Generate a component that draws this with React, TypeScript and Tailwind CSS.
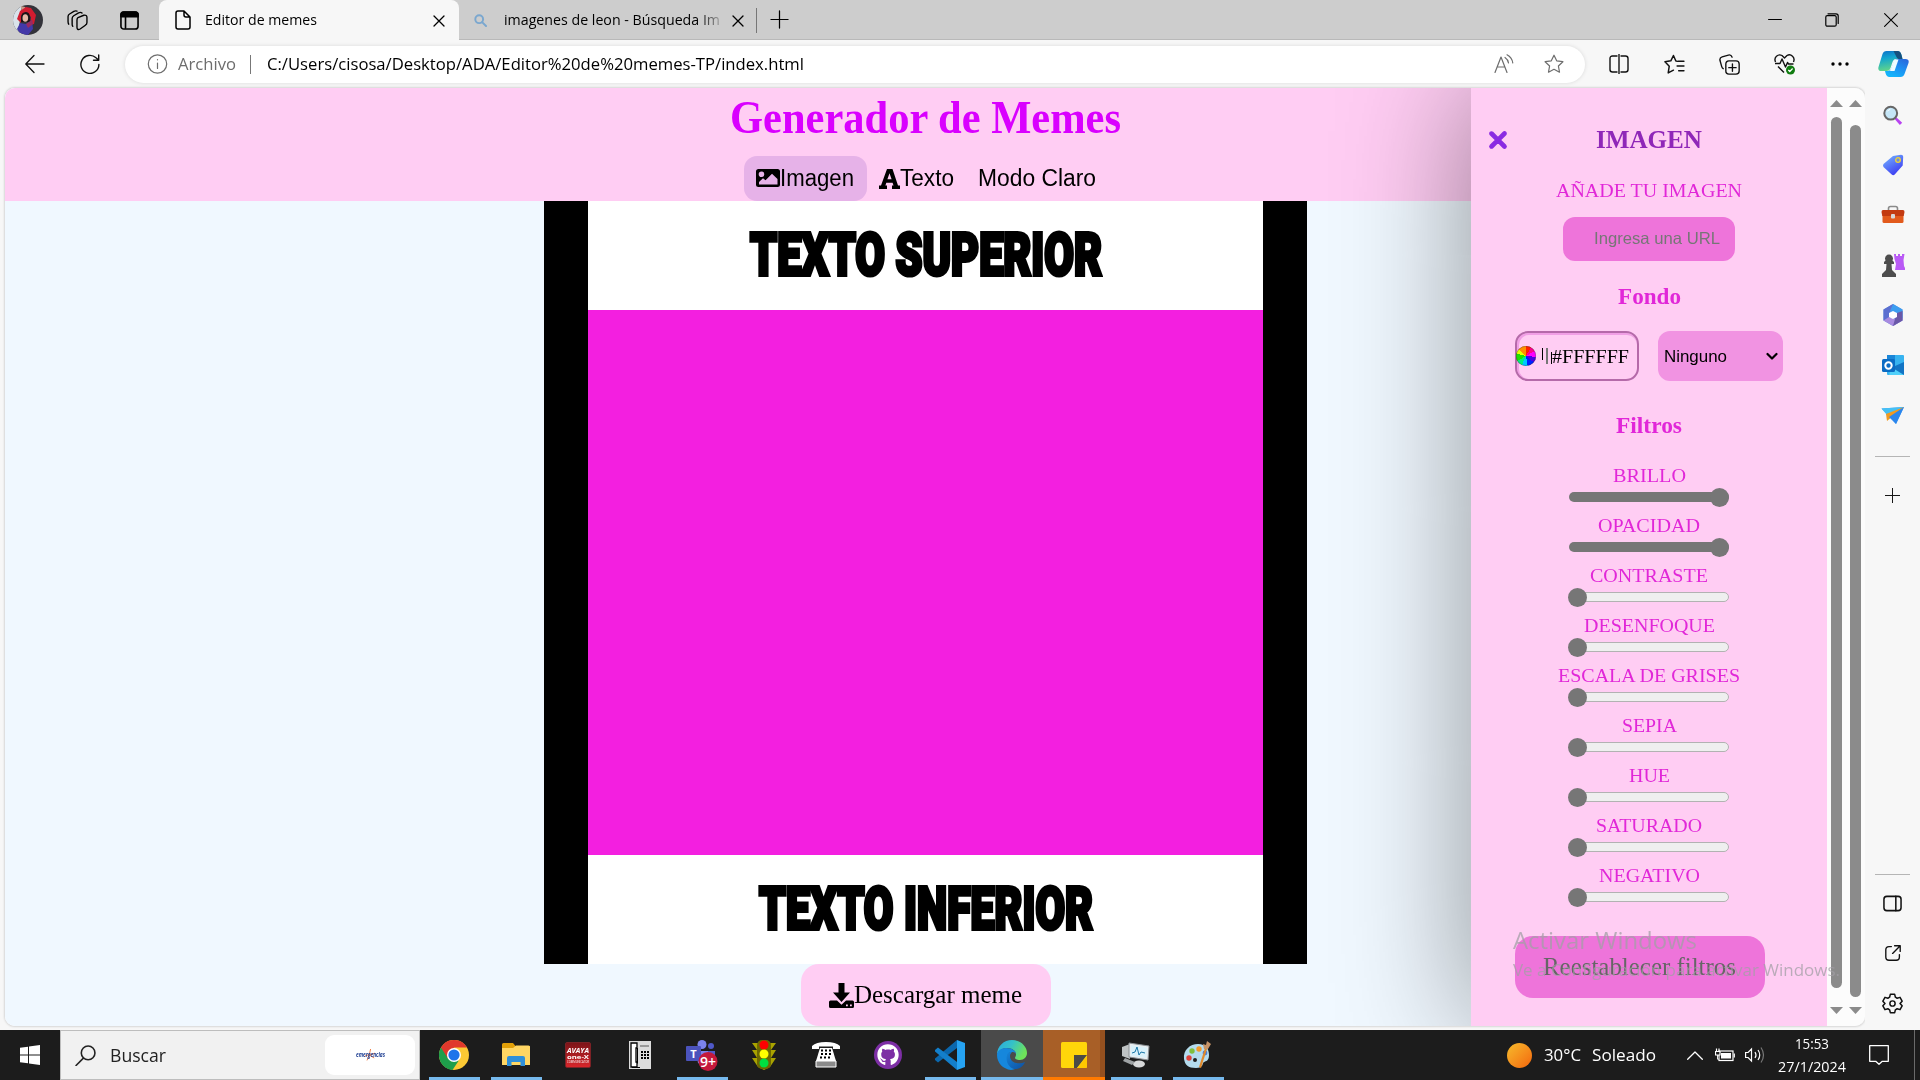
import { useLayoutEffect, useRef, useState, type ReactNode } from "react";
import { FaGithub, FaXmark } from "react-icons/fa6";

/** Text squeezed or stretched horizontally to an exact width. */
function Fit({ w, className = "", children }: { w: number; className?: string; children: ReactNode }) {
  const ref = useRef<HTMLSpanElement>(null);
  const [scale, setScale] = useState(1);
  useLayoutEffect(() => {
    const el = ref.current;
    if (el) setScale(w / (el.getBoundingClientRect().width / scale));
  }, [w]);
  return (
    <span className={`block shrink-0 whitespace-pre ${className}`} style={{ width: w }}>
      <span ref={ref} className="inline-block origin-left" style={{ transform: `scaleX(${scale})` }}>
        {children}
      </span>
    </span>
  );
}

type IconProps = { className?: string; children: ReactNode; box?: string; sw?: number };
function Line({ className = "", children, box = "0 0 20 20", sw = 1.3 }: IconProps) {
  return (
    <svg viewBox={box} className={`block shrink-0 ${className}`} fill="none" stroke="currentColor" strokeWidth={sw} strokeLinecap="round" strokeLinejoin="round">
      {children}
    </svg>
  );
}

const STAR = "M10 1.2l2.7 5.6 6.2.9-4.5 4.3 1.1 6.2L10 15.3l-5.500 2.900 1.100-6.200L1.100 7.700l6.200-.9z";

function Close({ className = "" }: { className?: string }) {
  return (
    <Line className={className} box="0 0 12 12">
      <path d="M1 1l10 10M11 1L1 11" />
    </Line>
  );
}

function TabStrip() {
  return (
    <div className="flex h-10 items-start bg-[#cdcdcd] text-black shadow-[inset_0_-1px_0_#b9b9b9]">
      <div className="flex h-10 w-[159px] items-center">
        <svg viewBox="0 0 30 30" className="ml-[13px] h-[30px] w-[30px]">
          <defs>
            <clipPath id="avatar"><circle cx="15" cy="15" r="15" /></clipPath>
          </defs>
          <g clipPath="url(#avatar)">
            <rect width="30" height="30" fill="#33333a" />
            <path d="M0 0h9L5 30H0z" fill="#d9e2ea" />
            <path d="M8 1l4 1 2 3-5 3z" fill="#c99b86" />
            <path d="M7 6l6-4 5 1 5 7-2 9-4 1 1-8-5-5-5 4v7l-4-4z" fill="#d31c30" />
            <path d="M8 13q0-6 5-6 4 0 4 6v4H8z" fill="#1c1418" />
            <ellipse cx="12.300" cy="13" rx="2.800" ry="3.800" fill="#e5b7a6" />
            <path d="M7 18l6 1 6-4 1 9-5 6H8L4 24z" fill="#4338a8" />
            <path d="M13 19l6-4 1 4-5 4z" fill="#9a2a60" />
          </g>
        </svg>
        <Line className="ml-[24px] h-[21px] w-[21px]">
          <path d="M10.500 7.200l5.500-2.200q3-.6 3 2v5q0 1.700-1.500 2.500l-5 3.600q-3 1.400-3-1.600V9.500q0-1.500 1-2.300z" />
          <path d="M5.500 15.500q-.6-.6-.6-2V8q0-1.500 1.500-2.500L11 2.700q2-.9 3.300.2M1.600 13.500Q1 12.500 1 11V6.200q0-1.500 1.500-2.400L6.500 1.300q1.500-.8 3-.2" />
        </Line>
        <Line className="ml-[32px] h-[19px] w-[19px]" sw={1.7}>
          <rect x="1" y="1" width="18" height="18" rx="3" />
          <path d="M1 4q0-3 3-3h12q3 0 3 3v2H1z" fill="currentColor" />
          <path d="M5.800 6v12" />
        </Line>
      </div>
      <div className="flex h-10 w-[300px] items-center rounded-t-[8px] bg-[#f7f7f7]">
        <Line className="ml-4 h-[20px] w-4" box="0 0 16 20" sw={1.500}>
          <path d="M3 1h6l6 6v10q0 2-2 2H3q-2 0-2-2V3q0-2 2-2zM9 1v4q0 2 2 2h4" />
        </Line>
        <Fit w={112} className="ml-[14px] font-['Open_Sans'] text-[14.500px]">Editor de memes</Fit>
        <Close className="ml-[116px] mt-px h-3 w-3" />
      </div>
      <div className="flex h-10 w-[299px] items-center border-r border-transparent">
        <Line className="ml-[15px] h-[13px] w-[13px] text-[#7aa7cf]" sw={3}>
          <circle cx="8" cy="8" r="6" /><path d="M12.500 12.500l6 6" />
        </Line>
        <div className="ml-[17px] flex overflow-hidden [mask-image:linear-gradient(to_right,black_90%,rgba(0,0,0,0.25))]">
          <Fit w={216} className="font-['Open_Sans'] text-[14.500px]">imagenes de leon - Búsqueda Im</Fit>
        </div>
        <Close className="ml-[13px] mt-px h-3 w-3" />
        <span className="ml-3 mt-px h-[25px] w-px bg-[#777]" />
      </div>
      <Line className="ml-[12px] mt-[10px] h-[19px] w-[19px]"><path d="M10 1v18M1 10h18" /></Line>
      <Line className="ml-auto mr-[43px] mt-[12px] h-[14px] w-[14px]" box="0 0 14 14" sw={1.200}><path d="M.6 7.500h12.800" /></Line>
      <Line className="mr-[45px] mt-[13px] h-[14px] w-[14px]" box="0 0 14 14" sw={1.200}>
        <rect x=".8" y="2.600" width="10.400" height="10.600" rx="1.500" />
        <path d="M3 .8h8q2.200 0 2.200 2.200v7.500" />
      </Line>
      <Line className="mr-[22px] mt-[13px] h-[14px] w-[14px]" box="0 0 14 14" sw={1.100}><path d="M.6.600l12.800 12.800M13.400.6L.6 13.400" /></Line>
    </div>
  );
}

function Copilot() {
  return (
    <svg viewBox="0 0 30 28" className="ml-[29px] h-[28px] w-[31px] shrink-0">
      <defs>
        <linearGradient id="cpa" x1="0" y1="0" x2=".2" y2="1"><stop stopColor="#0d6fc9" /><stop offset=".4" stopColor="#12a5cf" /><stop offset="1" stopColor="#5fd48c" /></linearGradient>
        <linearGradient id="cpb" x1="1" y1="0" x2=".4" y2="1"><stop stopColor="#2a62d8" /><stop offset=".5" stopColor="#1e8cf0" /><stop offset="1" stopColor="#14b4fb" /></linearGradient>
      </defs>
      <path d="M8 1h11q3 0 4 4l1 4h-6q-3 0-4 3l-2 6q-1 3-4 3H3q-4 0-3-4L4 4q1-3 4-3z" fill="url(#cpa)" />
      <path d="M15 1h4q3 0 4 4l1 4h-4q-2-1-3-4z" fill="#16507e" />
      <path d="M22 27H11q-3 0-4-4l-.5-2H9q3 0 4-3l2.500-6q1-3 4-3H27q4 0 3 4l-4 11q-1 3-4 3z" fill="url(#cpb)" />
      <path d="M16 9.500h4l-4 11.500h-4.500z" fill="#eefcff" />
    </svg>
  );
}

function Toolbar() {
  return (
    <div className="flex h-12 items-center bg-[#f7f7f7] text-[#111]">
      <Line className="ml-[25px] h-[20px] w-[20px]" sw={1.300}><path d="M19 10H1M9 1.500L.8 10 9 18.500" /></Line>
      <Line className="ml-[35px] h-[20px] w-[20px]" sw={1.400}>
        <path d="M18.900 10.500A9 9 0 1 1 16 3.800L18.500 6M18.700 1v5.200h-5.200" />
      </Line>
      <div className="ml-[25px] flex h-[37px] w-[1460px] items-center rounded-full bg-white text-[#6d6d6d] shadow-[0_0_4px_rgba(0,0,0,0.12)]">
        <Line className="ml-[22px] h-[20px] w-[21px]" sw={1.200}><circle cx="10" cy="10" r="9.200" /><path d="M10 9v5.500M10 5.600v.2" /></Line>
        <Fit w={58} className="ml-[10px] font-['Open_Sans'] text-[16.500px]">Archivo</Fit>
        <span className="ml-[14px] h-[19px] w-px bg-[#777]" />
        <Fit w={537} className="ml-[16px] font-['Open_Sans'] text-[16.500px] text-black">C:/Users/cisosa/Desktop/ADA/Editor%20de%20memes-TP/index.html</Fit>
        <Line className="ml-auto mr-[30px] h-[20px] w-[20px]" sw={1.200}>
          <path d="M1 18.500L7 3l6 15.500M3.200 13h7.600M11 3.500q3 2 3.500 5.500M13 .8q5 2.700 5.800 8.200" />
        </Line>
        <Line className="mr-[21px] h-[20px] w-[20px]" sw={1.200}><path d={STAR} /></Line>
      </div>
      <Line className="ml-[24px] h-[20px] w-[20px]" sw={1.400}>
        <path d="M8 2H3.500Q1 2 1 4.500v11Q1 18 3.500 18H8M12 2h4.500Q19 2 19 4.500v11q0 2.500-2.500 2.500H12M10 0v20" />
      </Line>
      <Line className="ml-[35px] h-[21px] w-[21px]" sw={1.400}>
        <path d="M13 7l-1.700-.3L9 1.400 6.500 6.500l-5.600.9L5 11.600 4 18l5-2.600M13.500 7H19M12.500 11.500H19M14 16h5" />
      </Line>
      <Line className="ml-[34px] h-[21px] w-[21px]" sw={1.300}>
        <rect x="6.500" y="6.500" width="12.700" height="12.700" rx="3" /><path d="M12.800 9.500v7M9.300 13h7M4 14Q3 13.500 2.600 12L.9 6Q.5 3.500 3 2.800L9 1q2.500-.6 3.500 2" />
      </Line>
      <svg viewBox="0 0 21 22" className="ml-[34px] h-[22px] w-[21px] shrink-0" fill="none" stroke="#111" strokeWidth="1.400" strokeLinejoin="round">
        <path d="M1.500 9Q0 5.500 2.500 3.200t5.500-.7L10.500 5 13 2.500q3-1.700 5.500.7T19.500 9M1 10.500h5l2-4.500 3.500 8 2-4.500 1 1.500h5M4 13.500l6 6" />
        <circle cx="16.500" cy="17" r="4.500" fill="#107c10" stroke="none" />
        <path d="M14.300 17l1.500 1.500 2.800-3" stroke="#fff" strokeWidth="1.200" />
      </svg>
      <svg viewBox="0 0 18 4" className="ml-[36px] h-1 w-[18px]"><circle cx="2" cy="2" r="1.700" /><circle cx="9" cy="2" r="1.700" /><circle cx="16" cy="2" r="1.700" /></svg>
      <Copilot />
    </div>
  );
}

function MemeText({ w, children }: { w: number; children: string }) {
  return (
    <div className="flex h-[109px] items-start justify-center overflow-hidden bg-white">
      <Fit w={w} className="font-['Roboto'] text-[60px] leading-[107px] font-black text-black [-webkit-text-stroke:4px_black]">{children}</Fit>
    </div>
  );
}

function Editor() {
  return (
    <div className="flex w-[1841px] flex-col items-center bg-[#f0f8ff]">
      <header className="flex h-[113px] w-full flex-col items-center bg-[#ffcdf3]">
        <h1 className="mt-0.5 h-[66px] font-['Liberation_Serif'] text-[46.500px] leading-[56px] font-bold text-[#d900ff]">
          <Fit w={391}>Generador de Memes</Fit>
        </h1>
        <nav className="mr-[11px] flex h-[45px] items-center font-['Liberation_Sans'] text-[23.500px] text-black">
          <button className="flex h-[45px] w-[123px] items-center rounded-[13px] bg-[#e6b2e8] pl-3">
            <svg viewBox="0 0 24 18" className="mt-[-1px] h-[18px] w-6 shrink-0">
              <path fillRule="evenodd" d="M2.500 0h19Q24 0 24 2.500v13q0 2.500-2.500 2.500h-19Q0 18 0 15.500v-13Q0 0 2.500 0zM5.500 2.500a2.800 2.800 0 1 0 0 5.600 2.800 2.800 0 0 0 0-5.600zM3 15.500h18.500V10L16 4.800l-6.500 6.500-2.500-2L3 13z" />
            </svg>
            <Fit w={74}>Imagen</Fit>
          </button>
          <button className="ml-[12px] flex items-center">
            <svg viewBox="0 0 21 20" className="h-5 w-[21px] shrink-0">
              <path fillRule="evenodd" d="M8 0h5.500L19 16.500h2V20h-8v-3.500h1.500l-.9-2.800H7.300l-.9 2.800H8V20H0v-3.500h2zM8.400 10.300h4.200L10.500 4.200z" />
            </svg>
            <Fit w={54}>Texto</Fit>
          </button>
          <button className="ml-[24px]"><Fit w={118}>Modo Claro</Fit></button>
        </nav>
      </header>
      <main className="flex h-[763px] w-[763px] flex-col border-x-[44px] border-black">
        <MemeText w={352}>TEXTO SUPERIOR</MemeText>
        <div className="flex-1 bg-[#f31fe0]" />
        <MemeText w={334}>TEXTO INFERIOR</MemeText>
      </main>
      <button className="flex h-[62px] w-[250px] items-center rounded-[18px] bg-[#ffcdf3] pl-7 font-['Liberation_Serif'] text-[25.500px] text-black">
        <svg viewBox="0 0 25 25" className="h-[25px] w-[25px] shrink-0">
          <path d="M9.500 0h6v9.500H21L12.500 19 4 9.500h5.500z" />
          <path fillRule="evenodd" d="M1.500 17.500H8l4.500 4.300 4.500-4.300h6.500q1.500 0 1.500 1.500v4.500q0 1.500-1.500 1.500h-22Q0 25 0 23.500V19q0-1.500 1.500-1.500zM17 21.500v1.800h1.800v-1.800zM21 21.500v1.800h1.800v-1.800z" />
        </svg>
        <Fit w={168}>Descargar meme</Fit>
      </button>
    </div>
  );
}

const filters = [
  { name: "BRILLO", w: 73, full: true },
  { name: "OPACIDAD", w: 102, full: true },
  { name: "CONTRASTE", w: 118, full: false },
  { name: "DESENFOQUE", w: 131, full: false },
  { name: "ESCALA DE GRISES", w: 182, full: false },
  { name: "SEPIA", w: 55, full: false },
  { name: "HUE", w: 41, full: false },
  { name: "SATURADO", w: 106, full: false },
  { name: "NEGATIVO", w: 101, full: false },
];

const wheel = "bg-[conic-gradient(#ff2000_0_30deg,#ff0090_30deg_60deg,#ff00ff_60deg_95deg,#5000e0_95deg_130deg,#0020ff_130deg_170deg,#00c8ff_170deg_205deg,#00f080_205deg_240deg,#20e000_240deg_285deg,#e8ff00_285deg_315deg,#ff9000_315deg)]";

function Panel() {
  return (
    <aside className="relative flex w-[356px] shrink-0 flex-col items-center bg-[#ffcdf3] font-['Liberation_Serif'] text-[#e127d8] shadow-[0_0_130px_rgba(0,0,0,0.42)]">
      <div className="mt-[37px] flex h-[30px] w-full items-center">
        <FaXmark className="ml-[15px] h-[26px] w-6 stroke-[#8a2be2] stroke-[28px] text-[#8a2be2]" />
        <Fit w={106} className="ml-[86px] text-[25px] leading-[30px] font-bold text-[#8f27b8]">IMAGEN</Fit>
      </div>
      <Fit w={186} className="mt-[24px] text-[19.500px] leading-6">AÑADE TU IMAGEN</Fit>
      <div className="mt-[14px] flex h-11 w-[172px] items-center rounded-[12px] bg-[#ee74da] pl-[31px] text-[#767676]">
        <Fit w={126} className="mt-[-1px] font-['Liberation_Sans'] text-[16.500px]">Ingresa una URL</Fit>
      </div>
      <Fit w={63} className="mt-[22px] text-[22.400px] leading-7 font-bold">Fondo</Fit>
      <div className="mt-[20px] flex h-[50px] w-[268px] justify-between text-black">
        <div className="flex w-[124px] items-center rounded-[13px] border-2 border-[#b56aa9] shadow-[inset_1px_1px_0_1px_#f19fe5]">
          <span className={`-ml-px h-5 w-5 shrink-0 rounded-full ${wheel} shadow-[inset_0_0_1px_black]`} />
          <span className="ml-[6px] flex h-4 w-[10px] shrink-0 justify-between">
            <span className="h-3 w-px bg-black" />
            <span className="h-4 w-[2px] bg-[#777]" />
            <span className="mt-1 h-3 w-px bg-black" />
          </span>
          <Fit w={77} className="mt-px text-[19.500px]">#FFFFFF</Fit>
        </div>
        <div className="flex w-[125px] items-center rounded-[12px] bg-[#f193e2] pl-[6px] font-['Liberation_Sans'] text-[16.500px]">
          <Fit w={63}>Ninguno</Fit>
          <Line className="ml-[39px] h-3 w-3" box="0 0 12 12" sw={2.200}><path d="M1.500 4L6 8.500 10.500 4" /></Line>
        </div>
      </div>
      <Fit w={66} className="mt-[31px] text-[22.400px] leading-7 font-bold">Filtros</Fit>
      <div className="mt-[24px] flex flex-col items-center">
        {filters.map((f) => (
          <div key={f.name} className="flex h-[50px] flex-col items-center">
            <Fit w={f.w} className="h-6 text-[19.500px] leading-6">{f.name}</Fit>
            <div className={f.full ? "mt-[4px] flex h-[10px] w-[160px] items-center justify-end rounded-full bg-[#767676]" : "mt-[4px] flex h-[10px] w-[160px] items-center rounded-full border border-[#b2b2b2] bg-[#efefef]"}>
              <span className={f.full ? "h-[19px] w-[19px] shrink-0 rounded-full bg-[#767676]" : "-ml-[2px] h-[19px] w-[19px] shrink-0 rounded-full bg-[#767676]"} />
            </div>
          </div>
        ))}
      </div>
      <button className="mt-[22px] ml-[44px] flex h-[62px] w-[250px] items-center justify-center self-start rounded-[18px] bg-[#ee74da] text-[25.500px] text-[#666]">
        <Fit w={193} className="-ml-0.5">Reestablecer filtros</Fit>
      </button>
      <div className="pointer-events-none absolute top-[836px] left-[42px] z-20 font-['Open_Sans'] text-[#a39fa6]/75">
        <Fit w={184} className="text-[23.500px] leading-[33px]">Activar Windows</Fit>
        <Fit w={327} className="text-[16px] leading-[26px]">Ve a Configuración para activar Windows.</Fit>
      </div>
    </aside>
  );
}

function Scrollbar({ tall }: { tall?: boolean }) {
  return (
    <div className="flex w-[19px] flex-col items-center text-[#8b8b8b]">
      <svg viewBox="0 0 13 7" className="mt-3 h-[7px] w-[13px] fill-current"><path d="M0 7L6.500 0 13 7z" /></svg>
      <div className={tall ? "mt-[10px] mb-[19px] w-[11px] flex-1 rounded-full bg-current" : "mt-[18px] mb-[10px] w-[11px] flex-1 rounded-full bg-current"} />
      <svg viewBox="0 0 13 7" className="mb-3 h-[7px] w-[13px] fill-current"><path d="M0 0l6.500 7L13 0z" /></svg>
    </div>
  );
}

function Slot({ children }: { children: ReactNode }) {
  return <div className="flex h-[50px] items-center justify-center">{children}</div>;
}

function Sidebar() {
  return (
    <div className="flex w-[55px] flex-col bg-[#f7f7f7] text-[#111]">
      <div className="mt-[2px] flex flex-col">
        <Slot>
          <svg viewBox="0 0 24 24" className="h-[22px] w-[22px]">
            <path d="M15 14l7 6.500-2.500 2.500-6-7z" fill="#b843f0" />
            <circle cx="9.500" cy="10" r="7" fill="#c5e6f7" stroke="#666" strokeWidth="2.200" />
            <path d="M6 8q1-2 3-2" stroke="#fff" fill="none" />
          </svg>
        </Slot>
        <Slot>
          <svg viewBox="0 0 24 24" className="h-6 w-6">
            <defs><linearGradient id="tag" x2=".6" y2="1"><stop stopColor="#78bdff" /><stop offset="1" stopColor="#3d3cf2" /></linearGradient></defs>
            <path d="M12 3l8-1.300q2.200 0 2.200 2l-.5 8.800-8 9q-1.500 1.500-3 0L2.500 14q-1-1.500 0-3z" fill="url(#tag)" />
            <circle cx="17" cy="7" r="2.300" fill="#6c8ee0" stroke="#f5d32e" strokeWidth="1.300" />
          </svg>
        </Slot>
        <Slot>
          <svg viewBox="0 0 24 24" className="h-6 w-6">
            <path d="M7.500 7V5.500q0-2 2-2h5q2 0 2 2V7" fill="none" stroke="#8a8a8a" strokeWidth="1.600" />
            <rect x="1.500" y="11" width="21" height="9" rx="1.500" fill="#e25a1c" />
            <path d="M2 7h20q1.500 0 1.500 2l-.8 4H1.300L.5 9Q.5 7 2 7z" fill="#c33a10" />
            <rect x="10" y="11" width="4" height="4.500" rx="1" fill="#d8d8d8" />
          </svg>
        </Slot>
        <Slot>
          <svg viewBox="0 0 24 24" className="h-6 w-6">
            <path d="M13 1h2v2h2V1h2v2h2V1h2.500l-1 6 .5 6 2 4H14l1-6-1.500-5z" fill="#b95af5" />
            <path d="M4.500 7.500a4 4 0 1 1 7 0L13 9v2h-2.500l.5 6 4 4v3H1v-3l4-4 .5-6H3V9z" fill="#4d4d4d" />
          </svg>
        </Slot>
        <Slot>
          <svg viewBox="0 0 24 24" className="h-6 w-6">
            <path d="M12 1l9.500 5.500v11L12 23l-9.500-5.500v-11z" fill="#5d8ee0" />
            <path d="M12 1l9.500 5.500v9L15 11 9 8z" fill="#3c9df0" />
            <path d="M2.500 6.500L12 1l-3 7-1 8-5.500 1.500z" fill="#5b6fd0" />
            <path d="M2.500 17.500L8 14l6 2 7.500-1v2.500L12 23z" fill="#a88be0" />
            <path d="M21.500 8v9.500L12 23l2-7 2-6z" fill="#6a58a8" />
            <path d="M12 8l4 2v4l-4 2-4-2v-4z" fill="#fff" />
          </svg>
        </Slot>
        <Slot>
          <svg viewBox="0 0 24 24" className="h-6 w-6">
            <rect x="6" y="2" width="17" height="20" rx="1" fill="#37b3f0" />
            <path d="M6 2h8v8H6z" fill="#1a86d8" />
            <path d="M14 13l9-4v13H8z" fill="#1274c4" />
            <path d="M10 14l13 8H8z" fill="#50d0fa" />
            <rect x="1" y="6" width="13" height="13" rx="1.500" fill="#0b6cc4" />
            <circle cx="7.500" cy="12.500" r="3.200" fill="none" stroke="#fff" strokeWidth="2" />
          </svg>
        </Slot>
        <Slot>
          <svg viewBox="0 0 24 24" className="h-6 w-6">
            <path d="M.5 5.500L23 4l-8 17-5-6z" fill="#3a9cf2" />
            <path d="M.5 5.500L23 4 6 12z" fill="#45c0f5" />
            <path d="M23 4L5 11l1 7z" fill="#f39a1f" />
            <path d="M23 4L8 14l7 7z" fill="#2b86ee" />
          </svg>
        </Slot>
      </div>
      <div className="mx-[10px] mt-[16px] h-px bg-[#b5b5b5]" />
      <Line className="mx-auto mt-[31px] h-[15px] w-[15px]"><path d="M10 0v20M0 10h20" /></Line>
      <div className="mx-[10px] mt-auto h-px bg-[#b5b5b5]" />
      <div className="mt-[3px] mb-[2px] flex flex-col">
        <Slot><Line className="h-[19px] w-[19px]" sw={1.600}><rect x="1" y="2.500" width="18" height="15" rx="3" /><path d="M13.500 2.500v15" /></Line></Slot>
        <Slot><Line className="h-4 w-4" sw={1.700}><path d="M8 2H5Q1 2 1 6v9q0 4 4 4h9q4 0 4-4v-3M12 1h7v7M19 1l-9.500 9.500" /></Line></Slot>
        <Slot>
          <Line className="h-[21px] w-[21px]" box="0 0 24 24" sw={1.700}>
            <circle cx="12" cy="12" r="3" />
            <path d="M9.500 1.500h5l.8 3.300 2 1.200 3.300-1 2.400 4.300L20.600 12l2.400 2.700-2.400 4.300-3.300-1-2 1.200-.8 3.300h-5l-.8-3.300-2-1.200-3.300 1L1 14.700 3.400 12 1 9.300 3.400 5l3.300 1 2-1.200z" />
          </Line>
        </Slot>
      </div>
    </div>
  );
}

function Task({ children, mark = "", cell = "" }: { children: ReactNode; mark?: string; cell?: string }) {
  return (
    <div className={`flex h-[50px] w-[62px] flex-col items-center ${cell}`}>
      <div className="flex h-[47px] items-center pt-[3px]">{children}</div>
      <div className={`h-[3px] ${mark}`} />
    </div>
  );
}

const running = "w-[51px] bg-[#76b9ed]";

function Taskbar() {
  return (
    <div className="flex h-[50px] items-center bg-[#1c1c1c] text-white">
      <div className="flex w-[60px] justify-center">
        <svg viewBox="0 0 20 20" className="h-5 w-5" fill="#fff"><path d="M0 2.800l8-1.100v7.800H0zM9 1.600L20 0v9.500H9zM0 10.500h8v7.800l-8-1.100zM9 10.500h11V20L9 18.400z" /></svg>
      </div>
      <div className="flex h-[50px] w-[360px] items-center border border-[#bdbdbd] bg-[#f1f1f1] text-[#222]">
        <Line className="ml-[14px] h-[21px] w-[21px]" sw={1.500}><circle cx="12.500" cy="7.500" r="6.500" /><path d="M8 12.500L1 19.500" /></Line>
        <Fit w={56} className="ml-[14px] font-['Open_Sans'] text-[17.500px]">Buscar</Fit>
        <div className="relative ml-auto mr-1 flex h-10 w-[90px] items-center justify-center rounded-[9px] bg-white">
          <svg viewBox="0 0 20 20" className="absolute h-[12px] w-[12px]" stroke="#f07030" strokeWidth="1.500" fill="none"><path d="M11 0L9 9 1 12M18 7l-9 3-4 9M9 10l8 5" /></svg>
          <Fit w={29} className="relative font-['Open_Sans'] text-[6.500px] leading-[10px] font-bold text-[#1f3f93] italic">emergencias</Fit>
        </div>
      </div>
      <div className="ml-[3px] flex">
        <Task mark={running}>
          <svg viewBox="0 0 30 30" className="h-[30px] w-[30px]">
            <circle cx="15" cy="15" r="15" fill="#fcc934" />
            <path d="M15 15L2 7.500A15 15 0 0 0 13.500 30l6-9z" fill="#1e9e4b" />
            <path d="M2 7.500a15 15 0 0 1 26 0H15L9 18.500z" fill="#e0382c" />
            <circle cx="15" cy="15" r="7" fill="#fff" /><circle cx="15" cy="15" r="5.600" fill="#1f75ea" />
          </svg>
        </Task>
        <Task mark={running}>
          <svg viewBox="0 0 28 24" className="h-6 w-7">
            <path d="M0 1.500Q0 0 1.500 0h9.500l2.500 3H28v5H0z" fill="#e2a008" />
            <path d="M0 5h11l3-2.500h12.500q1.500 0 1.500 1.500V22H0z" fill="#ffd663" />
            <path d="M5 23v-8q0-2 2-2h14q2 0 2 2v8h-4.500v-4h-9v4z" fill="#2f8fd8" />
          </svg>
        </Task>
        <Task>
          <div className="flex h-[26px] w-[26px] flex-col items-center justify-center rounded-[2px] border border-[#7c2226] bg-gradient-to-b from-[#7d1418] to-[#d9262b] font-['Open_Sans'] text-white">
            <Fit w={22} className="text-[7px] leading-[7px] font-bold italic">AVAYA</Fit>
            <Fit w={22} className="text-[6px] leading-[6px] font-bold">one-X</Fit>
            <Fit w={22} className="text-[3px] leading-[4px]">COMMUNICATOR</Fit>
          </div>
        </Task>
        <Task>
          <svg viewBox="0 0 22 28" className="h-7 w-[22px]">
            <rect width="22" height="28" fill="#dcdcdc" />
            <path d="M2 2h6v5H7v14h1v5H2z" fill="#fff" stroke="#000" strokeWidth="1.300" />
            <path d="M8.500 22.500V7M3 26.500h8" stroke="#000" fill="none" />
            <path d="M12 11h8M12 14h8M12 17h8" stroke="#000" strokeWidth="2" strokeDasharray="2 1" />
            <path d="M11 5h9" stroke="#999" strokeWidth="2" />
          </svg>
        </Task>
        <Task mark={running}>
          <svg viewBox="0 0 32 32" className="h-8 w-8">
            <circle cx="16" cy="5.500" r="4.500" fill="#7b83eb" /><circle cx="25" cy="7" r="3" fill="#5059c9" />
            <path d="M10 12h12v12q-5 4-10 0z" fill="#7b83eb" /><path d="M22 12h7v9q-4 3-7 0z" fill="#5059c9" />
            <rect x="0" y="7" width="15" height="15" rx="1" fill="#4b53bc" />
            <text x="7.500" y="18.500" textAnchor="middle" fontFamily="Open Sans" fontWeight="700" fontSize="11" fill="#fff">T</text>
            <circle cx="22" cy="22.500" r="9.500" fill="#c4183c" />
            <text x="22" y="27.500" textAnchor="middle" fontFamily="Open Sans" fontWeight="600" fontSize="14" fill="#fff">9+</text>
          </svg>
        </Task>
        <Task>
          <svg viewBox="0 0 24 30" className="h-[30px] w-6">
            <path d="M0 3h24l-5 7h5l-5 8h5l-6 9-6 3-6-3-6-9h5l-5-8h5z" fill="#a9a300" />
            <rect x="5" y="0" width="14" height="29" rx="5" fill="#6d6900" />
            <circle cx="12" cy="5" r="4.500" fill="#f00" /><circle cx="12" cy="14" r="4.500" fill="#ff0" /><circle cx="12" cy="23" r="4.500" fill="#00e040" />
          </svg>
        </Task>
        <Task>
          <svg viewBox="0 0 30 26" className="h-[26px] w-[30px]">
            <path d="M1 7V4q4-4 14-4t14 4v3h-7V4.500H8V7z" fill="#fff" />
            <path d="M9 6h12l4 13H5z" fill="#fff" /><path d="M5 19h20v6H5z" fill="#8b8b8b" stroke="#fff" />
            <path d="M10 8.500h10M10 12h10M9 15.500h12" stroke="#000" strokeWidth="1.800" strokeDasharray="2 2" />
          </svg>
        </Task>
        <Task>
          <div className="flex h-7 w-7 items-center justify-center rounded-full bg-[#7d2fa5]"><FaGithub className="h-[22px] w-[22px] text-white" /></div>
        </Task>
        <Task mark={running}>
          <svg viewBox="0 0 30 30" className="h-[30px] w-[30px]">
            <path d="M22 0v8L3 22.500 0 20v-1.500z" fill="#0b67ad" />
            <path d="M22 30v-8L3 7.500 0 10v1.500z" fill="#137fcb" />
            <path d="M22 0l8 3v24l-8 3z" fill="#26a3f2" />
          </svg>
        </Task>
        <Task mark="w-full bg-[#76b9ed]" cell="bg-[#4a4a4a]">
          <svg viewBox="0 0 30 30" className="h-[30px] w-[30px]">
            <defs>
              <linearGradient id="eg" x1="0" y1="0" x2="1" y2=".4"><stop stopColor="#2aa8e0" /><stop offset=".5" stopColor="#35c1c8" /><stop offset="1" stopColor="#6ee35a" /></linearGradient>
              <linearGradient id="eb" x1="0" y1="0" x2="1" y2="1"><stop stopColor="#1583d8" /><stop offset="1" stopColor="#0e4fa0" /></linearGradient>
            </defs>
            <path d="M0 15C0 6 7 0 15 0s15 6 15 13c0 4-3 7-7 7-3 0-5-1-5-2s1-1 1-4c0-3-4-6-9-6C5 8 1 11 0 15z" fill="url(#eg)" />
            <path d="M0 15c0-4 4-7 9-7 6 0 10 3 10 6-1-2-3-2-4-2-3 0-5 3-5 6 0 6 5 10 11 9-2 2-5 3-7 3C6 29 0 23 0 15z" fill="#1687dc" />
            <path d="M11 13c-4 7 1 17 9 16 4-1 7-4 8-7-6 3-15 1-15-6 0-2 1-3 2-4-2 0-3 0-4 1z" fill="url(#eb)" />
          </svg>
        </Task>
        <Task mark="w-full bg-[#ff7a00]" cell="bg-linear-to-r from-[#a85f27] from-92% to-[#94501f] to-92%">
          <svg viewBox="0 0 26 26" className="h-[26px] w-[26px]"><rect width="26" height="26" rx="1.500" fill="#ffd60a" /><path d="M13 13h13L16 26h-3z" fill="#4b4b46" /><path d="M16 26l10-12v10.500q0 1.500-1.500 1.500z" fill="#ffc800" /></svg>
        </Task>
        <Task mark={running}>
          <svg viewBox="0 0 28 26" className="h-[26px] w-7">
            <path d="M0 5l8-3v15l-8-3z" fill="#bfc3c4" /><path d="M7 1l20 3-1 14-19-3z" fill="#e7edf0" stroke="#8a9094" />
            <path d="M9 3.500l16 2.300-.8 10L9 13.500z" fill="#d9f1fa" /><path d="M10 11l3-1 2-5 2 8 2-3 4 1" fill="none" stroke="#1b77a8" />
            <ellipse cx="17" cy="22" rx="6" ry="3.500" fill="#d7d9da" /><path d="M3 16l10 4-3 3-9-4z" fill="#9fa3a5" />
          </svg>
        </Task>
        <Task mark={running}>
          <svg viewBox="0 0 30 28" className="h-7 w-[30px]">
            <path d="M1 18C0 9 7 3 15 3s11 5 11 11-3 6-5 7 0 6-8 6S2 24 1 18z" fill="#b4dcee" />
            <circle cx="6" cy="17" r="2.700" fill="#e0413a" /><circle cx="9" cy="10" r="2.700" fill="#7fbf3e" /><circle cx="16" cy="8" r="2.700" fill="#f39a2b" /><circle cx="12" cy="19" r="2" fill="#1e1e1e" /><circle cx="22" cy="12" r="2.400" fill="#4a7fd6" />
            <path d="M22 7l2 1-6 19-2-1z" fill="#e0892c" /><path d="M20 3l3 1 1-4 4 3-3 5h-4z" fill="#c69367" />
          </svg>
        </Task>
      </div>
      <div className="ml-auto flex h-[50px] items-center font-['Open_Sans']">
        <span className="h-[25px] w-[25px] rounded-full bg-gradient-to-br from-[#f5bb2c] to-[#f2640c]" />
        <Fit w={37} className="ml-[12px] text-[17px]">30°C</Fit>
        <Fit w={64} className="ml-[11px] text-[17px]">Soleado</Fit>
        <Line className="ml-[31px] h-[9px] w-4" box="0 0 16 9"><path d="M.7 8.300L8 1l7.300 7.300" /></Line>
        <svg viewBox="0 0 20 14" className="ml-3 h-[14px] w-5" fill="none" stroke="#fff" strokeWidth="1.200">
          <rect x="4" y="3" width="14" height="9.500" /><rect x="6" y="5" width="10" height="5.500" fill="#fff" stroke="none" /><path d="M19.300 5.500v4" />
          <path d="M.5 3.500V7H5V3.500zM1.500 3V.5M4 3V.5M2.700 7v4H4" fill="#1c1c1c" />
        </svg>
        <svg viewBox="0 0 20 18" className="ml-[10px] h-[18px] w-5" fill="none" stroke="#fff" strokeWidth="1.200">
          <path d="M.6 6.500h2.500L6.500 3v12l-3.400-3.500H.6zM10 6q2 3 0 6M13 4q3.500 5 0 10" /><path d="M16 1.500q5 7.500 0 15" stroke="#777" />
        </svg>
        <div className="ml-[13px] flex w-[68px] flex-col items-center">
          <Fit w={34} className="text-[14px] leading-[23px]">15:53</Fit>
          <Fit w={68} className="text-[14px] leading-[23px]">27/1/2024</Fit>
        </div>
        <Line className="ml-[23px] h-[20px] w-[20px]" sw={1.300}><path d="M.7.7h18.600v15.600h-6L10 19.300l-3.300-3H.7z" /></Line>
        <span className="ml-[25px] mr-[5px] h-[50px] w-px bg-[#6a6a6a]" />
      </div>
    </div>
  );
}

export default function App() {
  return (
    <div className="flex h-[1080px] w-[1920px] flex-col overflow-hidden bg-[#f7f7f7]">
      <TabStrip />
      <Toolbar />
      <div className="flex h-[942px]">
        <div className="ml-[5px] h-[938px] w-[1860px] rounded-[10px] shadow-[0_0_2px_1px_rgba(0,0,0,0.13)]">
          <div className="flex h-[938px] overflow-hidden rounded-[10px] bg-[#fcfcfc]">
            <div className="-mr-[375px] flex shrink-0"><Editor /></div>
            <Panel />
            <div className="z-10 flex w-[38px] shrink-0 bg-[#fcfcfc]"><Scrollbar tall /><Scrollbar /></div>
          </div>
        </div>
        <Sidebar />
      </div>
      <Taskbar />
    </div>
  );
}
